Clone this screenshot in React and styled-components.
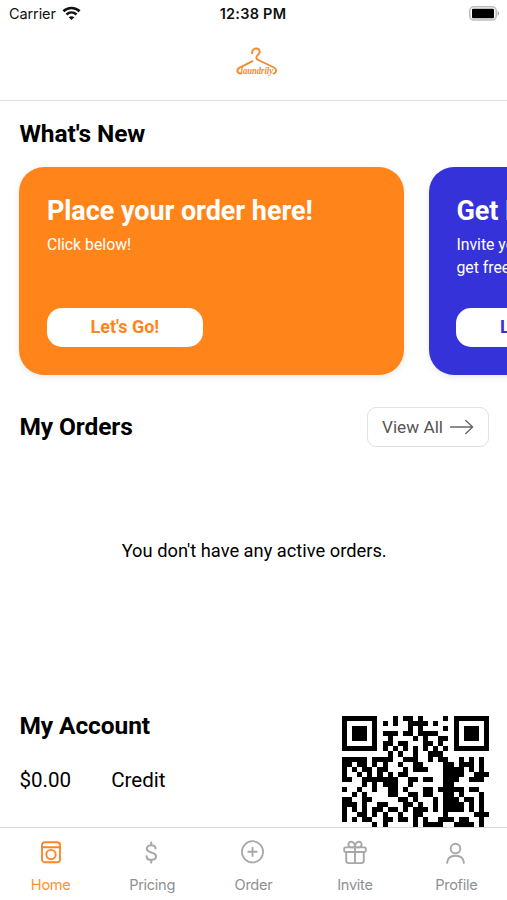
import React, { useState } from "react";
import styled, { createGlobalStyle, css } from "styled-components";

const GlobalStyle = createGlobalStyle`
  * {
    box-sizing: border-box;
  }

  body {
    margin: 0;
    background: #fff;
    color: #000;
    font-family: Roboto, sans-serif;
  }

  button {
    border: none;
    background: none;
    padding: 0;
    font-family: inherit;
    cursor: pointer;
  }
`;

const Screen = styled.div`
  display: flex;
  flex-direction: column;
  width: 507px;
  height: 900px;
  overflow: hidden;
  background: #fff;
`;

const StatusBar = styled.div`
  display: grid;
  grid-template-columns: 1fr auto 1fr;
  align-items: center;
  flex: none;
  height: 27px;
  padding: 0 7px 0 9px;
  font-family: Inter, sans-serif;
  font-size: 14.5px;
  color: #111;
`;

const Carrier = styled.div`
  display: flex;
  align-items: center;
  gap: 6px;
  letter-spacing: -0.1px;
`;

const Clock = styled.div`
  margin-right: 3px;
  font-weight: 600;
  letter-spacing: 0.25px;
`;

const BatteryIcon = styled.svg`
  justify-self: end;
`;

const Header = styled.header`
  display: flex;
  align-items: center;
  justify-content: center;
  flex: none;
  height: 74px;
  padding: 0 0 4px 6px;
  border-bottom: 1.5px solid #dedede;
`;

const Content = styled.main`
  display: flex;
  flex-direction: column;
  flex: 1;
  min-height: 0;
  overflow: hidden;
  padding-top: 17px;
`;

const Heading = styled.h2`
  margin: 0;
  font-size: 24.5px;
  line-height: 32px;
  font-weight: 700;
  letter-spacing: -0.08px;
`;

const Section = styled.section`
  flex: none;
  padding: 0 18px 0 19.4px;
`;

const Carousel = styled.div`
  display: flex;
  flex: none;
  gap: 24.5px;
  padding: 17px 0 32px 19.4px;
  overflow: hidden;
`;

const Card = styled.article`
  display: flex;
  flex-direction: column;
  align-items: flex-start;
  flex: none;
  width: 385px;
  height: 207.5px;
  padding: 27px 27.5px 27.5px;
  border-radius: 25px;
  background: ${({ color }) => color};
  color: #fff;
  box-shadow: 0 2px 7px rgba(0, 0, 0, 0.09);
`;

const CardTitle = styled.h3`
  margin: 0 0 6px;
  font-size: 27px;
  line-height: 34px;
  font-weight: 700;
  letter-spacing: -0.06px;
`;

const CardText = styled.p`
  margin: 0;
  font-size: 15.8px;
  line-height: 22.5px;
  white-space: pre-line;
`;

const CardButton = styled.button`
  width: 156px;
  height: 39.5px;
  margin-top: auto;
  border-radius: 15px;
  background: #fff;
  color: ${({ color }) => color};
  font-size: 18px;
  line-height: 22px;
  font-weight: 700;
`;

const OrdersBar = styled.div`
  display: flex;
  align-items: center;
  justify-content: space-between;
`;

const ViewAll = styled.button`
  display: flex;
  align-items: center;
  justify-content: center;
  gap: 7px;
  width: 122px;
  height: 40px;
  border: 1.5px solid #e2e2e2;
  border-radius: 9px;
  color: #555;
  font-size: 17.2px;
`;

const Empty = styled.p`
  margin: 0;
  padding: 91px 0 146px;
  text-align: center;
  font-size: 18.3px;
  line-height: 26px;
`;

const Account = styled.div`
  display: flex;
  justify-content: space-between;
`;

const Balance = styled.div`
  display: flex;
  gap: 40px;
  margin-top: 24px;
  font-size: 20.6px;
  line-height: 28px;
`;

const QrImage = styled.svg`
  display: block;
  width: 147px;
  height: 147px;
  margin-top: 6px;
`;

const TabBar = styled.nav`
  display: grid;
  grid-template-columns: repeat(5, 1fr);
  flex: none;
  height: 73px;
  border-top: 1.5px solid #dcdcdc;
  background: #fff;
`;

const Tab = styled.button`
  display: flex;
  flex-direction: column;
  align-items: center;
  padding-top: 10px;
  color: #8f8f94;
  font-family: Inter, sans-serif;
  font-size: 14.6px;
  line-height: 20px;
  letter-spacing: -0.3px;

  svg {
    margin-bottom: 7px;
    color: #a8a8a8;
  }

  ${({ $active }) =>
    $active &&
    css`
      color: #ff9136;

      svg {
        color: #fb8728;
      }
    `}
`;

const cards = [
  {
    title: "Place your order here!",
    text: "Click below!",
    color: "#ff851b",
  },
  {
    title: "Get Rewards!",
    text: "Invite your friends and\nget free credit!",
    color: "#3632d9",
  },
];

const qrRows = [
  "#######...#.##.#....#.#######",
  "#.....#.#.#..####.#...#.....#",
  "#.###.#......#.#....#.#.###.#",
  "#.###.#.###.##.####...#.###.#",
  "#.###.#..#....#.#..##.#.###.#",
  "#.....#.##.##...##.#..#.....#",
  "#######.#.#.#.#.#.#.#.#######",
  ".........#.#..#..###.........",
  "#####.####..###..#.##..#.#.#.",
  "##.##.#.#..#..##....##.###.#.",
  "#.#.##.##...#.###...####.#.#.",
  "#..#.#.#.#.##.......####..###",
  "##..#######..##.##..###..###.",
  "....#.#.###..#......##.......",
  "#..#..#..##.#...##.#####.##..",
  "..#.#....##..##.##..##.#...#.",
  "##..##.....##.#...#.###.##.#.",
  "###.#..##...##.#..#.####.#.#.",
  "#.#.#.##.##.#.###.#.####.#.#.",
  "#..##.#.#..#..##....#.....###",
  "#.#.##..##.##.#.#..###.##..#.",
  "......#.#.....#.####..####.#.",
  "#######.#..####..#.##.#.#.#.#",
  "#.....#..##.#..#.##.#...##..#",
  "#.###.#.#..##.#.#######.#.##.",
  "#.###.#.##.#..##..#.#..##.#.#",
  "#.###.#..###.#.##.#.##.#..##.",
  "#.....#.#.#..##..#..#.##.#..#",
  "#######.##.#.#.##.##..#.##.#.",
];

const WifiIcon = () => (
  <svg width="19" height="15" viewBox="0 0 19 15" fill="none" stroke="#111">
    <path d="M1.4 5.2C6 .9 13 .9 17.6 5.2" strokeWidth="2.7" />
    <path d="M4.5 8.5c2.9-2.6 7.1-2.6 10 0" strokeWidth="2.4" />
    <path d="M9.5 14.1 6.7 11.3c1.6-1.4 4-1.4 5.6 0z" fill="#111" stroke="none" />
  </svg>
);

const Battery = () => (
  <BatteryIcon width="31" height="15" viewBox="0 0 31 15">
    <rect x=".8" y=".8" width="26.4" height="13.2" rx="4" fill="#fff" stroke="#bdbdbd" strokeWidth="1.6" />
    <rect x="3" y="2.7" width="22" height="9.5" rx="1" fill="#000" />
    <path d="M28.6 5v5c2-.8 2-4.2 0-5z" fill="#aaa" />
  </BatteryIcon>
);

const Logo = () => (
  <svg width="42" height="30" viewBox="0 0 42 30" fill="none" stroke="#f28a30" strokeLinecap="round">
    <path
      d="M16.2 6.4c-.9-6.2 8.2-6.5 7.5-1.2-.4 2.9-3.5 3-3.4 5.7.1 1.4 1.3 1.8 3 2.6l14.6 7c3.2 1.6 2.7 5.2-.2 6.2"
      strokeWidth="1.9"
    />
    <path d="M16.5 14.2 4.2 20.3c-4.2 2-3.5 6 .6 6.2" strokeWidth="1.9" />
    <text
      x="4.5"
      y="26.6"
      textLength="32.5"
      lengthAdjust="spacingAndGlyphs"
      fill="#f28a30"
      stroke="none"
      fontFamily="Liberation Serif, serif"
      fontStyle="italic"
      fontWeight="700"
      fontSize="9.5"
    >
      laundrily
    </text>
  </svg>
);

const ArrowIcon = () => (
  <svg width="24" height="16" viewBox="0 0 24 16" fill="none" stroke="#666" strokeWidth="1.4">
    <path d="M.5 8h22M15.8 1.4 22.6 8l-6.8 6.6" strokeLinejoin="round" strokeLinecap="round" />
  </svg>
);

const TabIcon = ({ children }) => (
  <svg
    width="26"
    height="30"
    viewBox="0 0 26 30"
    fill="none"
    stroke="currentColor"
    strokeWidth="1.9"
    strokeLinecap="round"
    strokeLinejoin="round"
  >
    {children}
  </svg>
);

const tabs = [
  {
    label: "Home",
    icon: (
      <>
        <rect x="4" y="4.2" width="18" height="20" rx="2.8" />
        <path d="M4 9.2h18" />
        <circle cx="13" cy="16.6" r="4.7" />
      </>
    ),
  },
  {
    label: "Pricing",
    icon: (
      <path
        d="M16.6 10.4c-.3-2-1.8-3.1-4.4-3.1-2.7 0-4.4 1.3-4.4 3.5 0 4.8 9.2 2.7 9.2 7.5 0 2.3-1.9 3.6-4.6 3.6-2.8 0-4.6-1.4-4.8-3.6M12.2 4.6v2.6M12.2 22v2.6"
        strokeWidth="2.1"
      />
    ),
  },
  {
    label: "Order",
    icon: (
      <>
        <circle cx="12.5" cy="13.8" r="10.6" strokeWidth="1.7" />
        <path d="M12.5 9.6v8.4M8.3 13.8h8.4" />
      </>
    ),
  },
  {
    label: "Invite",
    icon: (
      <>
        <rect x="2.2" y="9.4" width="21.6" height="4.6" rx="1.2" />
        <path d="M4.2 14v8.6c0 1.7.8 2.5 2.5 2.5h12.6c1.7 0 2.5-.8 2.5-2.5V14M13 9.4v15.7" />
        <path d="M13 9.4H9.5c-4.2 0-3.9-5.6-.4-5.6 2.3 0 3.9 2 3.9 5.6zM13 9.4h3.5c4.2 0 3.9-5.6.4-5.6-2.3 0-3.9 2-3.9 5.6z" />
      </>
    ),
  },
  {
    label: "Profile",
    icon: (
      <>
        <circle cx="12.5" cy="10.6" r="4.8" />
        <path d="M4.1 24.8c.4-4.7 3.8-7 8.4-7s8 2.3 8.4 7" />
      </>
    ),
  },
];

const QrCode = () => (
  <QrImage viewBox="0 0 29 29" shapeRendering="crispEdges">
    {qrRows.map((row, y) =>
      row
        .split("")
        .map((cell, x) =>
          cell === "#" ? (
            <rect key={`${x}-${y}`} x={x} y={y} width="1" height="1" />
          ) : null
        )
    )}
  </QrImage>
);

const App = () => {
  const [current, setCurrent] = useState("Home");

  return (
    <Screen>
      <GlobalStyle />
      <StatusBar>
        <Carrier>
          Carrier <WifiIcon />
        </Carrier>
        <Clock>12:38 PM</Clock>
        <Battery />
      </StatusBar>
      <Header>
        <Logo />
      </Header>
      <Content>
        <Section>
          <Heading>What's New</Heading>
        </Section>
        <Carousel>
          {cards.map(({ title, text, color }) => (
            <Card key={title} color={color}>
              <CardTitle>{title}</CardTitle>
              <CardText>{text}</CardText>
              <CardButton color={color}>Let's Go!</CardButton>
            </Card>
          ))}
        </Carousel>
        <Section>
          <OrdersBar>
            <Heading>My Orders</Heading>
            <ViewAll>
              View All <ArrowIcon />
            </ViewAll>
          </OrdersBar>
          <Empty>You don't have any active orders.</Empty>
          <Account>
            <div>
              <Heading>My Account</Heading>
              <Balance>
                <span>$0.00</span>
                <span>Credit</span>
              </Balance>
            </div>
            <QrCode />
          </Account>
        </Section>
      </Content>
      <TabBar>
        {tabs.map(({ label, icon }) => (
          <Tab
            key={label}
            $active={label === current}
            onClick={() => setCurrent(label)}
          >
            <TabIcon>{icon}</TabIcon>
            {label}
          </Tab>
        ))}
      </TabBar>
    </Screen>
  );
};

export default App;
